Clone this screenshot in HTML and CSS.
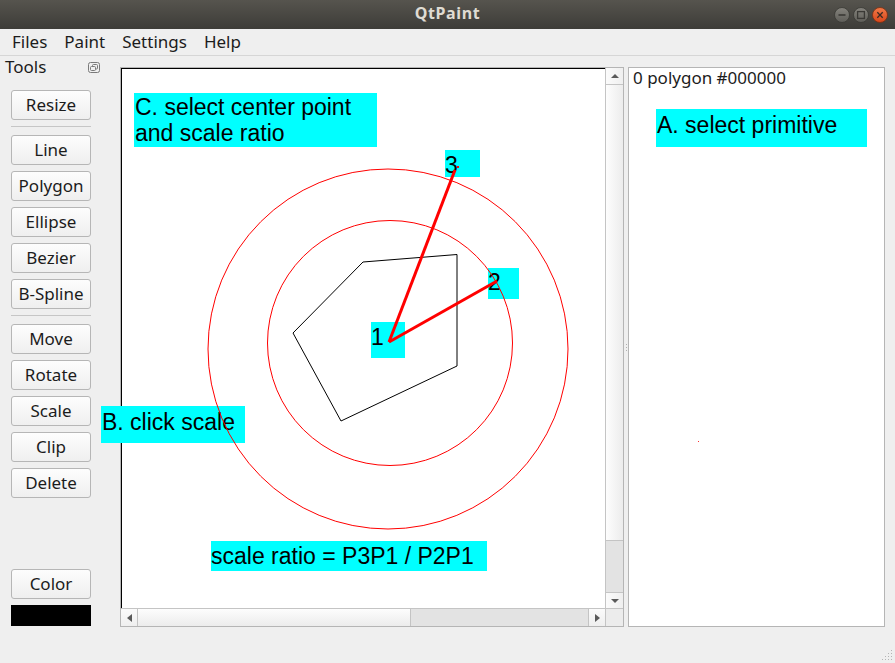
FILE: index.html
```html
<!DOCTYPE html>
<html lang="en">
<head>
<meta charset="utf-8">
<title>QtPaint</title>
<link rel="stylesheet" href="styles.css">
</head>
<body>
<div class="window">
  <header class="titlebar">
    <span class="title">QtPaint</span>
    <svg class="wbtns" width="54" height="16" viewBox="0 0 54 16">
      <defs>
        <linearGradient id="gg" x1="0" y1="0" x2="0" y2="1"><stop offset="0" stop-color="#85837d"/><stop offset="1" stop-color="#5e5d58"/></linearGradient>
        <linearGradient id="go" x1="0" y1="0" x2="0" y2="1"><stop offset="0" stop-color="#f27a48"/><stop offset="1" stop-color="#d8461a"/></linearGradient>
      </defs>
      <circle cx="8" cy="8" r="7.5" fill="url(#gg)" stroke="#393834" stroke-width="0.8"/>
      <line x1="4.5" y1="8" x2="11.5" y2="8" stroke="#3a3935" stroke-width="1.6"/>
      <circle cx="27" cy="8" r="7.5" fill="url(#gg)" stroke="#393834" stroke-width="0.8"/>
      <rect x="23.6" y="4.6" width="6.8" height="6.8" fill="none" stroke="#3a3935" stroke-width="1.3"/>
      <circle cx="46" cy="8" r="7.5" fill="url(#go)" stroke="#7a2e12" stroke-width="0.8"/>
      <path d="M43.3 5.3l5.4 5.4M48.7 5.3l-5.4 5.4" stroke="#3a2a22" stroke-width="1.3"/>
    </svg>
  </header>
  <nav class="menubar">
    <span>Files</span><span>Paint</span><span>Settings</span><span>Help</span>
  </nav>
  <main class="main">
    <aside class="dock">
      <div class="dock-head">
        <span>Tools</span>
        <svg class="float" width="12" height="11" viewBox="0 0 12 11">
          <rect x="0.5" y="0.5" width="11" height="10" rx="2" fill="none" stroke="#7a7a7a"/>
          <rect x="4.5" y="2.5" width="5" height="4.5" rx="1" fill="none" stroke="#7a7a7a"/>
          <rect x="2.5" y="4.5" width="5" height="4" rx="1" fill="#efefef" stroke="#7a7a7a"/>
        </svg>
      </div>
      <div class="tools">
        <button class="btn">Resize</button>
        <div class="sep"></div>
        <button class="btn">Line</button>
        <button class="btn">Polygon</button>
        <button class="btn">Ellipse</button>
        <button class="btn">Bezier</button>
        <button class="btn">B-Spline</button>
        <div class="sep"></div>
        <button class="btn">Move</button>
        <button class="btn">Rotate</button>
        <button class="btn">Scale</button>
        <button class="btn">Clip</button>
        <button class="btn">Delete</button>
        <button class="btn color">Color</button>
        <div class="swatch"></div>
      </div>
    </aside>
    <section class="scrollarea">
      <div class="viewport">
        <svg class="drawing" width="483" height="539" viewBox="122 69 483 539">
          <circle cx="388" cy="349" r="180" fill="none" stroke="#ff0000" stroke-width="1"/>
          <circle cx="390" cy="343" r="122.5" fill="none" stroke="#ff0000" stroke-width="1"/>
          <polygon points="363,262 457,254.5 457,366 341,421 293,333" fill="none" stroke="#000" stroke-width="1"/>
          <line x1="389" y1="342" x2="497" y2="281" stroke="#ff0000" stroke-width="3"/>
          <line x1="389" y1="342" x2="455" y2="170" stroke="#ff0000" stroke-width="3"/>
          <rect x="457" y="166" width="2" height="2" fill="#ff0000"/>
        </svg>
      </div>
      <div class="vbar">
        <div class="sb-btn up"><i class="arr-up"></i></div>
        <div class="vhandle"></div>
        <div class="track"></div>
        <div class="sb-btn down"><i class="arr-down"></i></div>
      </div>
      <div class="hbar">
        <div class="sb-btn left"><i class="arr-left"></i></div>
        <div class="hhandle"></div>
        <div class="track"></div>
        <div class="sb-btn right"><i class="arr-right"></i></div>
      </div>
      <div class="corner"></div>
    </section>
    <div class="splitter"><i></i><i></i><i></i></div>
    <section class="list">
      <div class="item">0 polygon #000000</div>
      <span class="stray"></span>
    </section>
  </main>
  <svg class="grip" width="11" height="11" viewBox="0 0 11 11">
    <g fill="#b4b4b4">
      <rect x="9" y="0" width="1" height="1"/>
      <rect x="6" y="3" width="1" height="1"/><rect x="9" y="3" width="1" height="1"/>
      <rect x="3" y="6" width="1" height="1"/><rect x="6" y="6" width="1" height="1"/><rect x="9" y="6" width="1" height="1"/>
      <rect x="0" y="9" width="1" height="1"/><rect x="3" y="9" width="1" height="1"/><rect x="6" y="9" width="1" height="1"/><rect x="9" y="9" width="1" height="1"/>
    </g>
  </svg>
  <div class="note note-c">C. select center point<br>and scale ratio</div>
  <div class="note note-a">A. select primitive</div>
  <div class="note note-b">B. click scale</div>
  <div class="note note-r">scale ratio = P3P1 / P2P1</div>
  <div class="note note-3">3</div>
  <div class="note note-2">2</div>
  <div class="note note-1">1</div>
</div>
</body>
</html>
```

FILE: styles.css
```css
* { box-sizing: border-box; margin: 0; padding: 0; }
html, body { width: 895px; height: 663px; overflow: hidden; }
body {
  background: #efefef;
  font-family: "Noto Sans", "DejaVu Sans", sans-serif;
  font-size: 17px;
  color: #1c1c1c;
}
.window {
  position: relative;
  width: 895px;
  height: 663px;
  display: flex;
  flex-direction: column;
}

/* title bar */
.titlebar {
  flex: none;
  height: 29px;
  background: linear-gradient(#56544e, #3d3c38);
  display: grid;
  grid-template-columns: 1fr auto 1fr;
  align-items: start;
}
.title {
  grid-column: 2;
  color: #dfdbd2;
  font-weight: bold;
  font-size: 16px;
  letter-spacing: 0.6px;
  line-height: 26px;
}
.wbtns {
  grid-column: 3;
  justify-self: end;
  margin: 7px 7px 0 0;
  display: block;
}

/* menu bar */
.menubar {
  flex: none;
  height: 27px;
  border-bottom: 1px solid #d6d6d6;
  display: flex;
  gap: 17px;
  padding-left: 12px;
  line-height: 26px;
}

/* main */
.main {
  flex: 1;
  display: flex;
  align-items: flex-start;
}

/* dock */
.dock {
  flex: none;
  width: 120px;
  display: flex;
  flex-direction: column;
}
.dock-head {
  height: 22px;
  display: flex;
  align-items: center;
  padding: 0 20px 0 5px;
  line-height: 22px;
}
.float { margin-left: auto; display: block; }
.tools {
  margin-top: 12px;
  padding-left: 11px;
  display: flex;
  flex-direction: column;
  align-items: flex-start;
}
.btn {
  width: 80px;
  height: 30px;
  border: 1px solid #b6b6b6;
  border-radius: 3px;
  background: linear-gradient(#fdfdfd, #efefef);
  font: inherit;
  color: #1c1c1c;
  line-height: 28px;
  padding: 0;
}
.btn + .btn { margin-top: 6px; }
.sep {
  width: 80px;
  height: 1px;
  background: #c6c6c6;
  margin: 6px 0 8px;
}
.btn.color { margin-top: 71px; }
.swatch {
  width: 80px;
  height: 21px;
  margin-top: 6px;
  background: #000;
}

/* scroll area */
.scrollarea {
  flex: none;
  width: 504px;
  height: 560px;
  margin-top: 11px;
  border: 1px solid #b5b5b5;
  display: grid;
  grid-template-columns: 484px 18px;
  grid-template-rows: 540px 18px;
}
.viewport {
  background: #fff;
  border-left: 1px solid #000;
  border-top: 1px solid #000;
  overflow: hidden;
}
.drawing {
  display: block;
  position: relative;
  z-index: 2;
}
.vbar {
  border-left: 1px solid #c4c4c4;
  background: #e3e3e3;
  display: flex;
  flex-direction: column;
}
.hbar {
  border-top: 1px solid #c4c4c4;
  background: #e3e3e3;
  display: flex;
}
.sb-btn {
  background: linear-gradient(90deg, #fbfbfb, #efefef);
  display: flex;
  align-items: center;
  justify-content: center;
  flex: none;
}
.up { height: 17px; border-bottom: 1px solid #c4c4c4; }
.down { height: 16px; border-top: 1px solid #c4c4c4; }
.left { width: 17px; border-right: 1px solid #c4c4c4; background: linear-gradient(#fbfbfb, #efefef); }
.right { width: 17px; border-left: 1px solid #c4c4c4; background: linear-gradient(#fbfbfb, #efefef); }
.vhandle {
  flex: none;
  height: 456px;
  border-bottom: 1px solid #c4c4c4;
  background: linear-gradient(90deg, #fdfdfd, #ececec);
}
.hhandle {
  flex: none;
  width: 273px;
  border-right: 1px solid #c4c4c4;
  background: linear-gradient(#fdfdfd, #ececec);
}
.track { flex: 1; }
.corner {
  border-left: 1px solid #c4c4c4;
  border-top: 1px solid #c4c4c4;
  background: #ececec;
}
.arr-up, .arr-down, .arr-left, .arr-right { display: block; width: 0; height: 0; }
.arr-up { border-left: 4.5px solid transparent; border-right: 4.5px solid transparent; border-bottom: 4px solid #5a5a5a; }
.arr-down { border-left: 4.5px solid transparent; border-right: 4.5px solid transparent; border-top: 4px solid #5a5a5a; }
.arr-left { border-top: 4.5px solid transparent; border-bottom: 4.5px solid transparent; border-right: 5px solid #5a5a5a; }
.arr-right { border-top: 4.5px solid transparent; border-bottom: 4.5px solid transparent; border-left: 5px solid #5a5a5a; }

/* splitter */
.splitter {
  flex: none;
  width: 4px;
  height: 560px;
  margin-top: 11px;
  display: flex;
  flex-direction: column;
  justify-content: center;
  align-items: center;
  gap: 2px;
}
.splitter i { display: block; width: 1px; height: 1px; background: #b0b0b0; }

/* list */
.list {
  position: relative;
  flex: none;
  width: 257px;
  height: 560px;
  margin-top: 11px;
  border: 1px solid #b5b5b5;
  background: #fff;
}
.item {
  padding: 1px 0 0 4px;
  line-height: 17px;
  white-space: nowrap;
}
.stray {
  position: absolute;
  left: 69px;
  top: 373px;
  width: 1px;
  height: 1px;
  background: #ff3030;
}

.grip { position: absolute; right: 2px; bottom: 2px; }

/* annotations (highlight marks under the canvas strokes) */
.note {
  position: absolute;
  z-index: 1;
  background: #00ffff;
  color: #000;
  font-family: "Liberation Sans", Arial, sans-serif;
  font-size: 23px;
  line-height: 26px;
  white-space: nowrap;
}
.note-c { left: 134px; top: 93px; width: 243px; height: 54px; padding: 1px 0 0 1px; }
.note-a { left: 656px; top: 109px; width: 211px; height: 38px; padding: 3px 0 0 1px; }
.note-b { left: 101px; top: 406px; width: 144px; height: 37px; padding: 3px 0 0 1px; }
.note-r { left: 211px; top: 541px; width: 276px; height: 30px; padding: 2px 0 0 0; }
.note-3 { left: 445px; top: 150px; width: 35px; height: 27px; padding: 2px 0 0 0; }
.note-2 { left: 488px; top: 268px; width: 31px; height: 31px; padding: 1px 0 0 0; }
.note-1 { left: 371px; top: 322px; width: 34px; height: 36px; padding: 2px 0 0 0; }
```
